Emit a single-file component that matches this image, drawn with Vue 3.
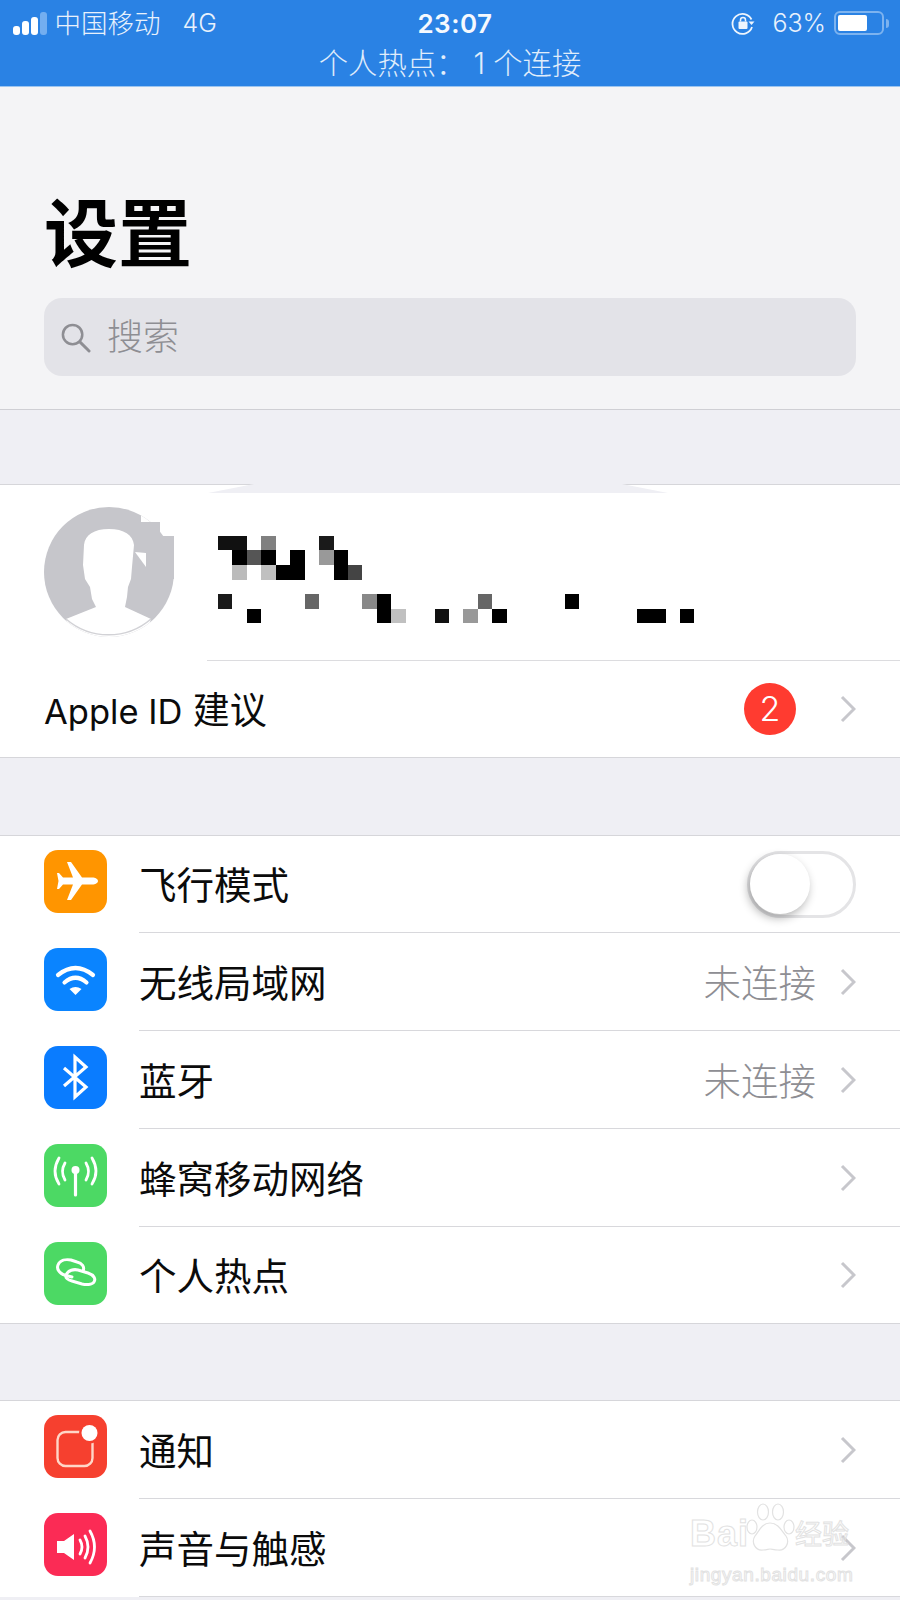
<script setup>
const cells = [
  [0,0,'#111',2],[0,3,'#808080'],[0,7,'#1a1a1a'],
  [1,1,'#000'],[1,2,'#555'],[1,3,'#000'],[1,5,'#000'],[1,7,'#999'],[1,8,'#000'],
  [2,1,'#bbb'],[2,3,'#c0c0c0'],[2,4,'#000',2],[2,8,'#000'],[2,9,'#444'],
  [4,0,'#1a1a1a'],[4,6,'#666'],[4,10,'#888'],[4,11,'#000'],[4,18,'#666'],[4,24,'#000'],
  [5,2,'#000'],[5,11,'#000'],[5,12,'#c0c0c0'],[5,15,'#111'],[5,17,'#999'],[5,19,'#000'],[5,29,'#000',2],[5,32,'#000']
]
const cellStyle = ([r, c, color, span]) => ({
  gridRow: r + 1,
  gridColumn: `${c + 1} / span ${span || 1}`,
  background: color
})
const group1 = [
  { key: 'plane', label: '飞行模式', color: '#ff9500', toggle: true },
  { key: 'wifi', label: '无线局域网', color: '#0a84ff', value: '未连接' },
  { key: 'bt', label: '蓝牙', color: '#0a7cff', value: '未连接' },
  { key: 'cell', label: '蜂窝移动网络', color: '#4cd964' },
  { key: 'hot', label: '个人热点', color: '#4cd964' }
]
const group2 = [
  { key: 'notify', label: '通知', color: '#f6402f' },
  { key: 'sound', label: '声音与触感', color: '#fb2b55' }
]
</script>

<template>
  <div class="page">
    <div class="topbar">
      <div class="status">
        <div class="status-left">
          <div class="signal"><i class="b1"></i><i class="b2"></i><i class="b3"></i><i class="b4"></i></div>
          <span class="carrier">中国移动</span>
          <span class="net">4G</span>
        </div>
        <div class="time">23:07</div>
        <div class="status-right">
          <svg class="lock" viewBox="0 0 24 24" width="24" height="24">
            <path d="M20.500 8.500A10 10 0 1 0 21 16" fill="none" stroke="#eef5fd" stroke-width="1.800"/>
            <path d="M17.500 10.500h6l-3 3.500z" fill="#eef5fd"/>
            <rect x="7.500" y="10.500" width="9" height="7.500" rx="1" fill="#eef5fd"/>
            <path d="M9.500 10.500V9a2.500 2.500 0 0 1 5 0v1.500" fill="none" stroke="#eef5fd" stroke-width="1.500"/>
          </svg>
          <span class="pct">63%</span>
          <div class="battery"><div class="level"></div></div>
          <div class="tip"></div>
        </div>
      </div>
      <div class="hotspot">个人热点： 1 个连接</div>
    </div>

    <header class="head">
      <h1>设置</h1>
      <div class="search">
        <svg viewBox="0 0 32 32" width="31" height="31">
          <circle cx="13" cy="13" r="10" fill="none" stroke="#8e8e93" stroke-width="2.600"/>
          <path d="M20.500 20.500 30 30" stroke="#8e8e93" stroke-width="3" stroke-linecap="round"/>
        </svg>
        <span>搜索</span>
      </div>
    </header>

    <div class="gap first"></div>

    <section class="group account">
      <div class="notch"></div>
      <div class="profile">
        <svg class="avatar" viewBox="0 0 130 130" width="130" height="130">
          <defs><clipPath id="round"><circle cx="65" cy="65" r="65"/></clipPath></defs>
          <circle cx="65" cy="65" r="65" fill="#c6c6cb"/>
          <g clip-path="url(#round)">
            <path d="M65 22C50 22 41 28 40 38L39 58L41 72L46 80L48 92L52 100L22 112L30 135H100L107 112L81 100L83 90L84 80L87 72L88 60L90 38C89 28 80 22 65 22Z" fill="#fff"/>
            <path d="M97 0V15H130V0Z" fill="#fff"/>
          </g>
          <path d="M97 15H116V29H130V72H97Z" fill="#c6c6cb"/>
          <path d="M91 45L102 46V60Z" fill="#fff"/>
          <path d="M22 112A65 65 0 0 0 107 112" fill="none" stroke="#d2d2d6" stroke-width="1.500"/>
        </svg>
        <div class="mosaic">
          <i v-for="(c, i) in cells" :key="i" :style="cellStyle(c)"></i>
        </div>
      </div>
      <div class="row suggestion">
        <div class="row-inner">
          <span class="label"><span class="latin">Apple ID</span> 建议</span>
          <span class="badge">2</span>
          <svg class="chev" viewBox="0 0 16 28" width="16" height="28"><path d="M2 2l12 12L2 26" fill="none" stroke="#c7c7cc" stroke-width="3"/></svg>
        </div>
      </div>
    </section>

    <div class="gap middle"></div>

    <section class="group main">
      <div v-for="item in group1" :key="item.key" class="row item">
        <div class="icon" :style="{ background: item.color }">
          <svg viewBox="0 0 63 63" width="63" height="63">
            <path v-if="item.key === 'plane'" d="M54 31c0-2-3-3.500-5.500-3.500H38L27 12h-4l6 15.500H19L15 23h-2l1.500 8L13 39h2l4-4.500h10L23 50h4l11-15.500h10.500C51 34.500 54 33 54 31z" fill="#fff"/>
            <g v-else-if="item.key === 'wifi'" fill="none" stroke="#fff" stroke-width="4.200" stroke-linecap="round">
              <path d="M14 27Q31.500 13 49 27"/>
              <path d="M20.500 34.500Q31.500 25 42.500 34.500"/>
              <path d="M25.500 41Q31.500 37 37.500 41L31.500 47z" fill="#fff" stroke="none"/>
            </g>
            <path v-else-if="item.key === 'bt'" d="M20 22l22 19-11 10V11l11 10-22 19" fill="none" stroke="#fff" stroke-width="3.200"/>
            <g v-else-if="item.key === 'cell'" fill="none" stroke="#fff" stroke-linecap="round">
              <circle cx="31.500" cy="26" r="4" fill="#fff" stroke="none"/>
              <path d="M31.500 27V51" stroke-width="3.200"/>
              <path d="M21 19Q16 27.500 21 36M42 19Q47 27.500 42 36" stroke-width="2.800"/>
              <path d="M15 14Q7 27.500 15 40M48 14Q56 27.500 48 40" stroke-width="2.800"/>
            </g>
            <g v-else fill="none" stroke="#fff" stroke-width="3" stroke-linecap="round">
              <path d="M28 35L24 34C17 33 12 28 14 23C16 18 22 17 27 18L33 20C38 21 41 25 39 29"/>
              <path d="M22 33C24 28 30 27 34 28L44 31C50 33 52 37 50 40C48 43 42 43 38 42L28 39C24 38 21 36 22 33Z"/>
            </g>
          </svg>
        </div>
        <div class="row-inner">
          <span class="label">{{ item.label }}</span>
          <div v-if="item.toggle" class="switch"><div class="knob"></div></div>
          <template v-else>
            <span v-if="item.value" class="value">{{ item.value }}</span>
            <svg class="chev" viewBox="0 0 16 28" width="16" height="28"><path d="M2 2l12 12L2 26" fill="none" stroke="#c7c7cc" stroke-width="3"/></svg>
          </template>
        </div>
      </div>
    </section>

    <div class="gap second"></div>

    <section class="group last">
      <div v-for="item in group2" :key="item.key" class="row item">
        <div class="icon" :style="{ background: item.color }">
          <svg viewBox="0 0 63 63" width="63" height="63">
            <g v-if="item.key === 'notify'">
              <rect x="13.500" y="17" width="35" height="34" rx="8" fill="none" stroke="#ffd6c8" stroke-width="2.400"/>
              <circle cx="45.500" cy="18" r="10.500" fill="#f6402f"/>
              <circle cx="45.500" cy="18" r="8" fill="#fff"/>
            </g>
            <g v-else>
              <path d="M13 28h7l10-7v26l-10-7h-7z" fill="#fff"/>
              <g fill="none" stroke="#fff" stroke-width="2.800" stroke-linecap="round">
                <path d="M36 27Q40 34 36 41"/>
                <path d="M41 23Q47 34 41 45"/>
                <path d="M46 18Q55 34 46 50"/>
              </g>
            </g>
          </svg>
        </div>
        <div class="row-inner">
          <span class="label">{{ item.label }}</span>
          <svg class="chev" viewBox="0 0 16 28" width="16" height="28"><path d="M2 2l12 12L2 26" fill="none" stroke="#c7c7cc" stroke-width="3"/></svg>
        </div>
      </div>
    </section>

    <div class="watermark">
      <div class="wm-top">
        <span class="wm-bai">Bai</span>
        <svg viewBox="0 0 50 50" width="50" height="50">
          <g fill="none" stroke="#e2e2e2" stroke-width="1.200">
            <ellipse cx="7" cy="24" rx="5" ry="7"/>
            <ellipse cx="18" cy="9" rx="5.500" ry="8"/>
            <ellipse cx="33" cy="9" rx="5.500" ry="8"/>
            <ellipse cx="44" cy="24" rx="5" ry="7"/>
            <path d="M25 20c-8 0-11 8-15 13-4 6 0 15 8 14 4 0 5-1 7-1s4 1 8 1c8 1 12-8 8-14-4-5-8-13-16-13z"/>
          </g>
          <text x="25" y="41" text-anchor="middle" class="wm-du">du</text>
        </svg>
        <span class="wm-cn">经验</span>
      </div>
      <div class="wm-url">jingyan.baidu.com</div>
    </div>
  </div>
</template>

<style scoped>
.page {
  position: relative;
  width: 900px;
  height: 1600px;
  overflow: hidden;
  background: #efeff4;
  font-family: "Inter", "Noto Sans CJK SC", sans-serif;
  color: #0b0b0b;
}
.topbar {
  height: 87px;
  background: #2a82e4;
  color: #e8f1fc;
  border-bottom: 1px solid #9cc5f0;
  box-sizing: border-box;
}
.status {
  display: grid;
  grid-template-columns: 1fr auto 1fr;
  align-items: center;
  height: 46px;
  padding: 0 11px 0 13px;
}
.status-left, .status-right { display: flex; align-items: center; }
.status-right { justify-content: flex-end; }
.signal { display: flex; align-items: flex-end; gap: 2.500px; height: 23px; margin-right: 8px; }
.signal i { width: 6.500px; border-radius: 3px; background: #fff; }
.signal .b1 { height: 9px; }
.signal .b2 { height: 14px; }
.signal .b3 { height: 18px; }
.signal .b4 { height: 23px; background: #73aef0; }
.carrier { font-size: 26.500px; line-height: 46px; font-weight: 300; }
.net { font-size: 25px; line-height: 46px; margin-left: 22px; font-weight: 300; }
.time { font-size: 26px; font-weight: 600; letter-spacing: 0.500px; margin-left: 8px; color: #f5f9fe; }
.lock { margin-right: 17px; }
.pct { font-size: 25px; font-weight: 300; margin-right: 8px; }
.battery {
  width: 50px; height: 24px; box-sizing: border-box;
  border: 2px solid #7db3ef; border-radius: 6px; padding: 2px;
}
.level { width: 29px; height: 100%; background: #fff; border-radius: 2px; }
.tip { width: 3px; height: 9px; margin-left: 2px; background: #7db3ef; border-radius: 0 3px 3px 0; }
.hotspot {
  text-align: center;
  font-size: 29.300px;
  line-height: 35px;
  font-weight: 300;
  color: #e0edfb;
}
.head {
  height: 323px;
  box-sizing: border-box;
  background: #f4f4f6;
  border-bottom: 1px solid #cfcfd4;
  padding: 0 44px 33px;
  display: flex;
  flex-direction: column;
  justify-content: flex-end;
}
h1 {
  margin: 0 0 20px;
  font-size: 74px;
  line-height: 88px;
  font-weight: 700;
  color: #000;
}
.search {
  display: flex;
  align-items: center;
  gap: 16px;
  height: 78px;
  box-sizing: border-box;
  padding: 0 0 6px 16px;
  border-radius: 18px;
  background: #e3e3e8;
  color: #8e8e93;
  font-size: 36px;
  font-weight: 300;
}
.search svg { margin-top: 6px; }
.gap { height: 75px; background: #efeff4; }
.gap.first { height: 74px; }
.gap.middle { height: 77px; }
.gap.second { height: 76px; }
.group {
  position: relative;
  background: #fff;
  border-top: 1px solid #d6d6da;
  border-bottom: 1px solid #d6d6da;
}
.group.last { border-bottom: none; }
.notch {
  position: absolute;
  left: 208px;
  right: 232px;
  top: -1px;
  height: 9px;
  background: #efeff4;
  clip-path: polygon(10% 0, 90% 0, 100% 100%, 0 100%);
}
.profile {
  display: flex;
  align-items: center;
  height: 176px;
  box-sizing: border-box;
  padding: 0 0 0 44px;
  gap: 44px;
}
.avatar { margin-top: -2px; flex: none; }
.mosaic {
  display: grid;
  grid-template-columns: repeat(33, 14.450px);
  grid-template-rows: repeat(6, 14.670px);
  margin-top: 13px;
}
.row { display: flex; align-items: stretch; height: 98px; box-sizing: border-box; }
.suggestion { height: 96px; padding-left: 45px; position: relative; }
.suggestion::before {
  content: "";
  position: absolute;
  left: 207px; right: 0; top: -1px;
  height: 1px;
  background: #dcdcdf;
}
.suggestion .row-inner { border-bottom: none; margin-left: 0; }
.item { padding-left: 44px; }
.main .item:first-child { height: 97px; }
.main .item:first-child .icon { margin-top: 14px; }
.main .item:last-child { height: 96px; }
.last .icon { margin-top: 14px; }
.icon {
  flex: none;
  width: 63px;
  height: 63px;
  margin-top: 15px;
  border-radius: 14px;
  overflow: hidden;
}
.icon svg { display: block; }
.row-inner {
  flex: 1;
  display: flex;
  align-items: center;
  padding-right: 44px;
  margin-left: 32px;
  border-bottom: 1px solid #d8d8dc;
  min-width: 0;
}
.item:last-child .row-inner { border-bottom: none; }
.group.last .item:last-child .row-inner { border-bottom: 1px solid #d8d8dc; }
.label { flex: 1; font-size: 37.500px; line-height: 44px; font-weight: 400; padding-top: 4px; }
.suggestion .label { font-size: 37px; margin-left: -1px; }
.latin { font-size: 34.500px; }
.value { font-size: 37.500px; line-height: 44px; color: #8e8e93; font-weight: 300; margin-right: 24px; padding-top: 4px; }
.chev { flex: none; }
.badge {
  flex: none;
  width: 52px;
  height: 52px;
  margin-right: 44px;
  border-radius: 50%;
  background: #ff3b30;
  color: #fff;
  font-size: 34px;
  font-weight: 300;
  line-height: 52px;
  text-align: center;
}
.switch {
  position: relative;
  width: 109px;
  height: 67px;
  box-sizing: border-box;
  border: 3px solid #e4e4e6;
  border-radius: 34px;
}
.knob {
  position: absolute;
  left: 0;
  top: 0;
  width: 60px;
  height: 60px;
  border-radius: 50%;
  background: #fff;
  box-shadow: -2px 4px 10px rgba(0, 0, 0, 0.3);
}
.watermark {
  position: absolute;
  left: 690px;
  top: 1503px;
  width: 165px;
  pointer-events: none;
}
.wm-top { display: flex; align-items: flex-end; height: 50px; }
.wm-bai, .wm-cn, .wm-url, .wm-du {
  color: transparent;
  fill: #fff;
  -webkit-text-stroke: 1px #e2e2e2;
  font-family: "Liberation Sans", "Noto Sans CJK SC", sans-serif;
}
.wm-bai { font-size: 36px; line-height: 38px; width: 55px; font-weight: 700; letter-spacing: 1px; }
.wm-cn { font-size: 27px; line-height: 36px; }
.wm-du { font-size: 15px; }
.wm-url { font-size: 19px; line-height: 26px; margin-top: 9px; white-space: nowrap; letter-spacing: 0.600px; }
</style>

<style>
html, body { margin: 0; background: #efeff4; }
</style>
